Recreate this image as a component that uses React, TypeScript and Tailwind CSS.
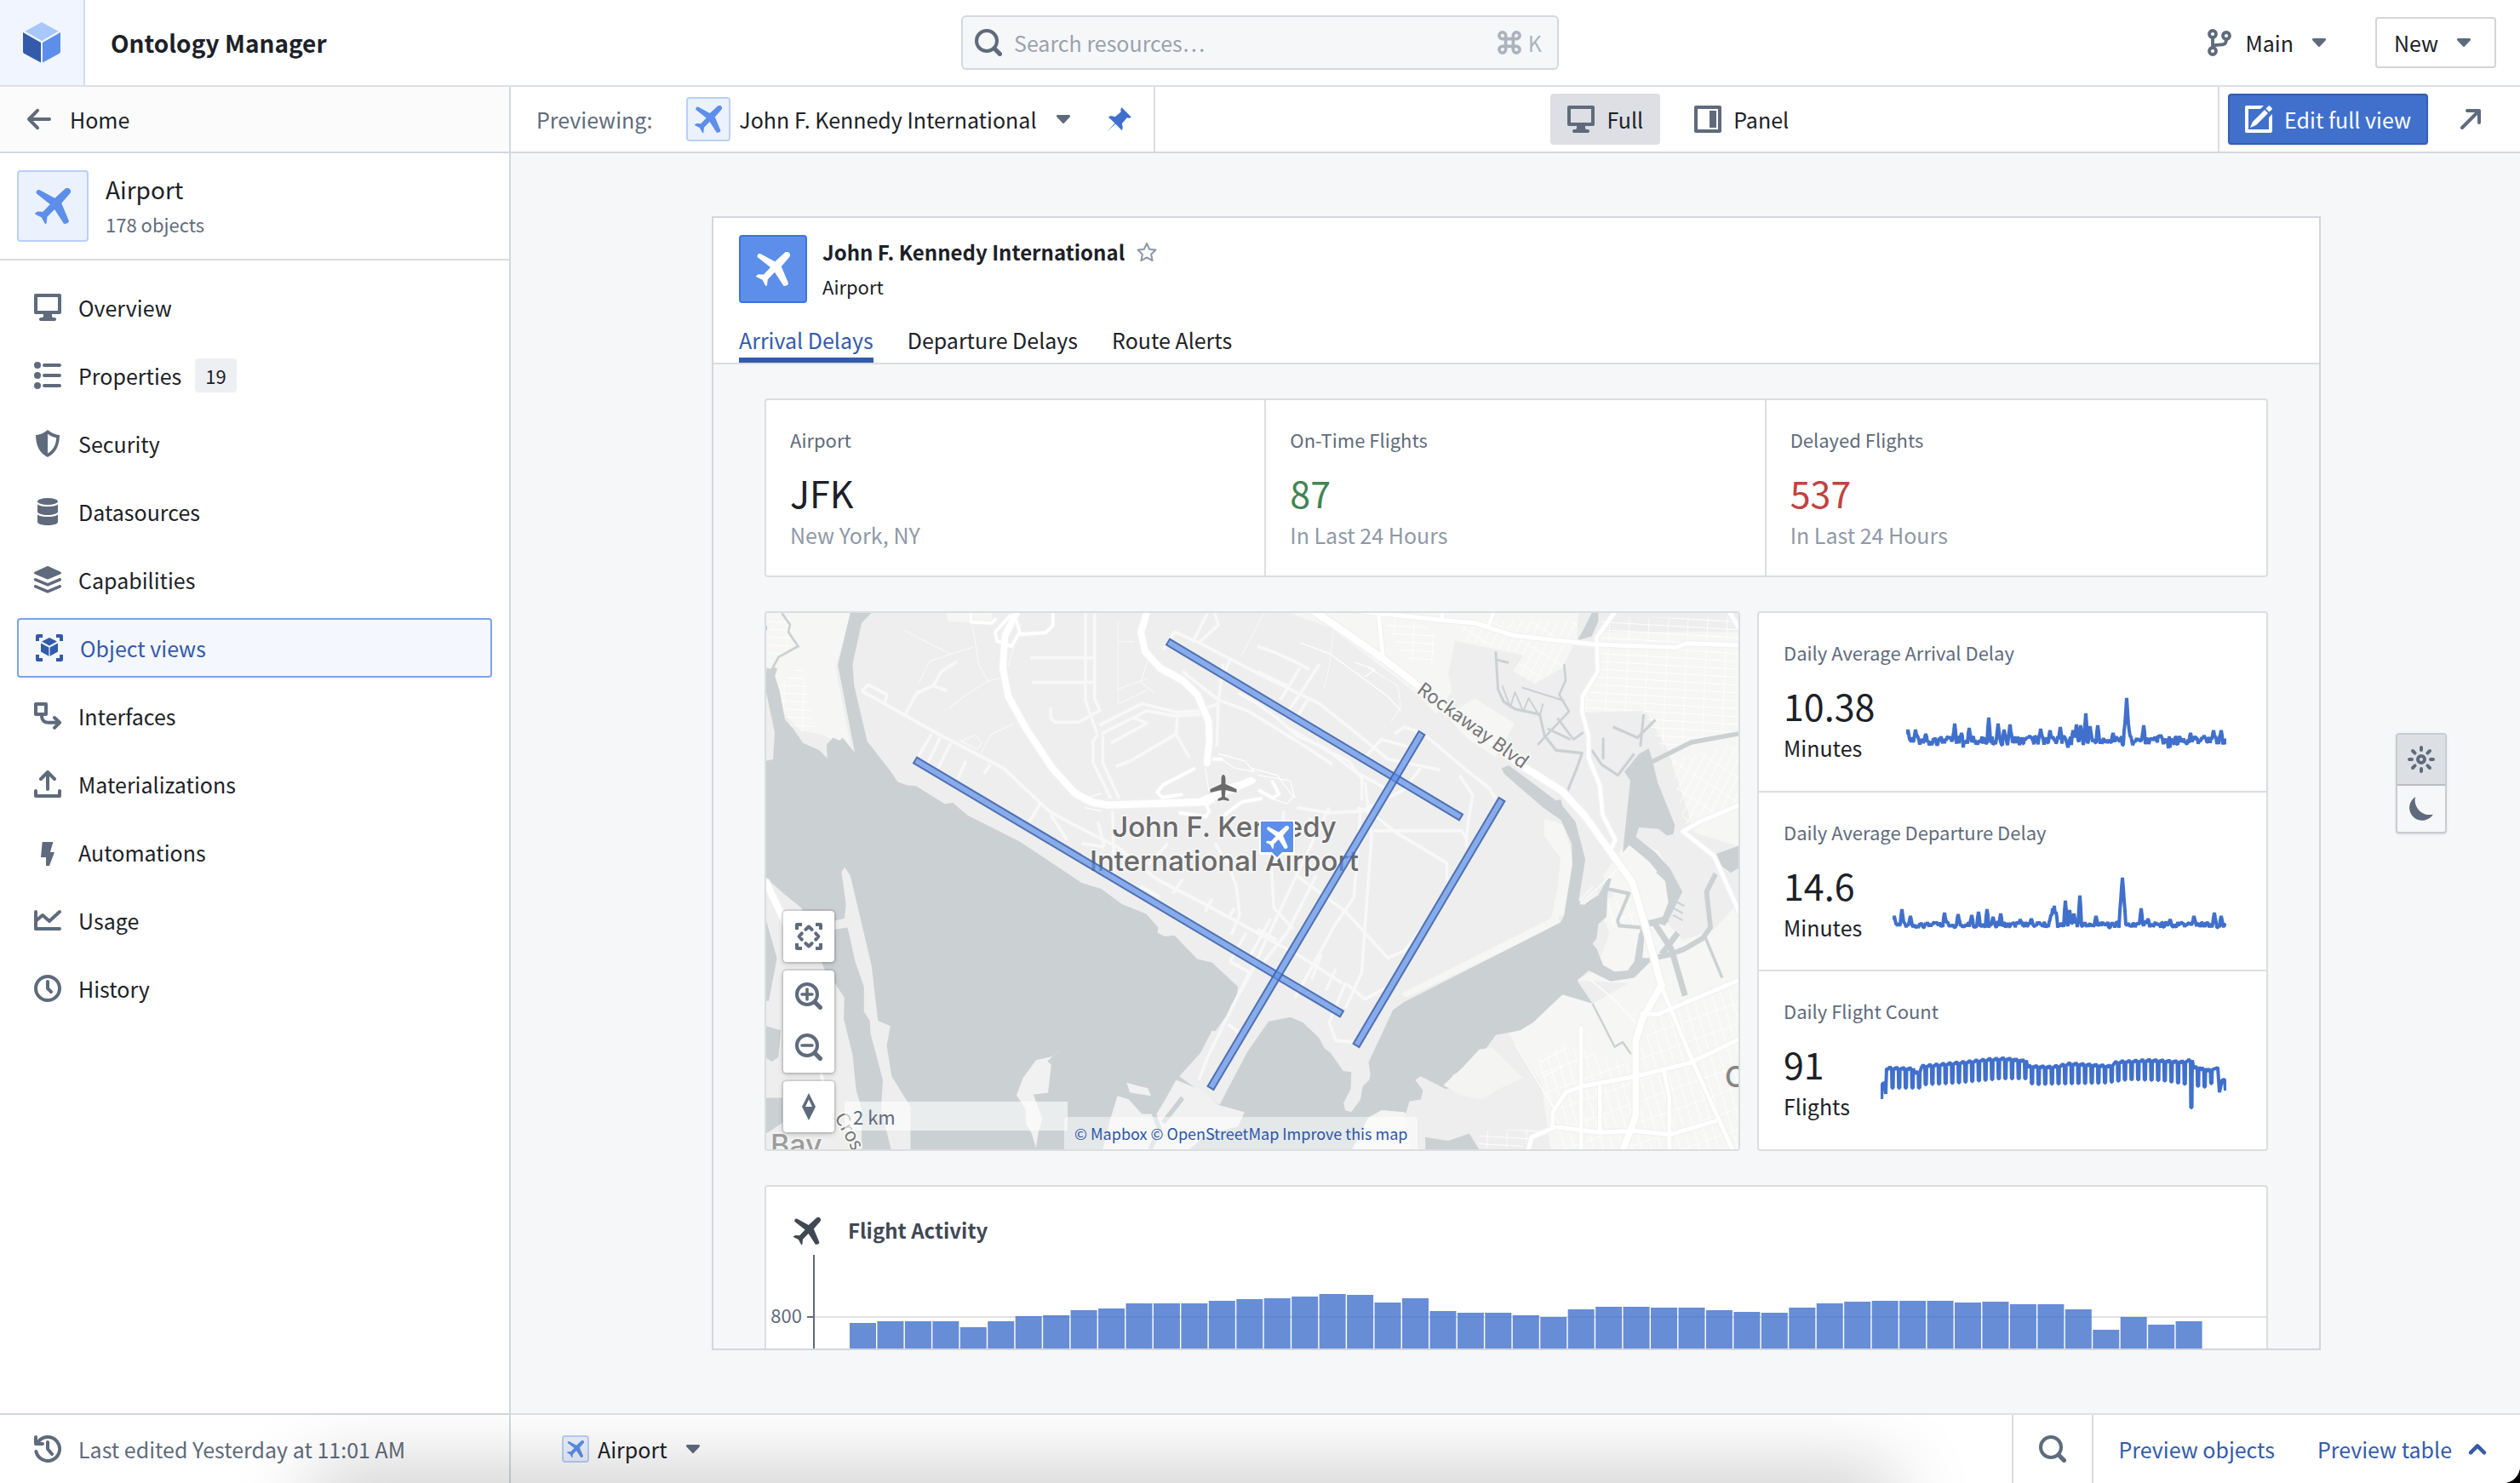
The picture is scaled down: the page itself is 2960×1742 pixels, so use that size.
import type { ReactNode } from "react";

/* ================= ICONS ================= */

type IconProps = { className?: string };

// all icons live on a 16 unit grid
function Icon({ className = "size-8 text-[#5f6b7c]", children }: IconProps & { children: ReactNode }) {
  return (
    <svg viewBox="0 0 16 16" fill="currentColor" className={`shrink-0 ${className}`} aria-hidden="true">
      {children}
    </svg>
  );
}

const Airplane = ({ className }: IconProps) => (
  <Icon className={className}>
    <path d="M15.6 2.5 11.9 6.8l3.2 7.6c.3.8-.3 1.2-.9 1.4l-1.2.2-4.2-6.5-3.3 3.4-.3 2.8c-.1.4-.6.4-.8 0L2.9 13 .4 11.8c-.5-.2-.5-.6-.1-.8l.8-.5 2.5.1 3.2-3.4L.9 2.6C.4 2.2.6 1.3 1.2.9c.3-.2.7-.1 1 0l6.700 3.600L13.400.4a1.500 1.500 0 0 1 2.200 2.100z" />
  </Icon>
);

const Desktop = ({ className }: IconProps) => (
  <Icon className={className}>
    <path d="M15 0H1C.4 0 0 .4 0 1v10c0 .6.4 1 1 1h4.500v1.100c0 .5-.5.9-1 .9H4c-.6 0-1 .4-1 1s.4 1 1 1h8c.6 0 1-.4 1-1s-.4-1-1-1h-.5c-.5 0-1-.4-1-.9V12H15c.6 0 1-.4 1-1V1c0-.6-.4-1-1-1zm-1 10H2V2h12v8z" />
  </Icon>
);

const Properties = () => (
  <Icon>
    <circle cx="2" cy="2" r="2" />
    <circle cx="2" cy="8" r="2" />
    <circle cx="2" cy="14" r="2" />
    <path d="M6 1h9a1 1 0 0 1 0 2H6a1 1 0 0 1 0-2zM6 7h9a1 1 0 0 1 0 2H6a1 1 0 0 1 0-2zM6 13h9a1 1 0 0 1 0 2H6a1 1 0 0 1 0-2z" />
  </Icon>
);

const Shield = () => (
  <Icon>
    <path
      fillRule="evenodd"
      d="M8 0c2 1.700 4.300 2.800 7 3-.1 6.200-2.200 10.700-7 13C3.200 13.700 1.100 9.200 1 3c2.700-.2 5-1.300 7-3zm0 2.400v11.400c3.200-1.900 4.900-5 5.100-9.200-1.900-.3-3.600-1.100-5.100-2.200z"
    />
  </Icon>
);

const Database = () => (
  <Icon>
    <ellipse cx="8" cy="2" rx="6" ry="2" />
    <path d="M2 3.700C3.300 4.600 5.500 5 8 5s4.700-.4 6-1.300V8c0 1-2.700 2-6 2S2 9 2 8zM2 9.700c1.300.9 3.500 1.300 6 1.300s4.700-.4 6-1.300V14c0 1.200-2.700 2-6 2s-6-.8-6-2z" />
  </Icon>
);

const Layers = () => (
  <Icon>
    <path d="M.4 3.400 7.500.1a1.200 1.200 0 0 1 1 0l7.100 3.300c.5.300.5.900 0 1.200L8.500 7.600a1.200 1.200 0 0 1-1 0L.4 4.600C-.1 4.300-.1 3.700.4 3.400z" />
    <path d="m.9 7.900 7.100 3 7.100-3M.9 11.900l7.100 3 7.100-3" fill="none" stroke="currentColor" strokeWidth="1.800" strokeLinecap="round" />
  </Icon>
);

const CubeLocate = ({ className }: IconProps) => (
  <Icon className={className}>
    <path d="M0 1a1 1 0 0 1 1-1h3v2H2v2H0zM12 0h3a1 1 0 0 1 1 1v3h-2V2h-2zM0 12h2v2h2v2H1a1 1 0 0 1-1-1zM14 12h2v3a1 1 0 0 1-1 1h-3v-2h2z" />
    <path d="M8 2l4.500 2.300L8 6.800 3.500 4.300zM3 5.200l4.700 2.500v5.200L3 10.300zM13 5.200 8.300 7.700v5.200L13 10.300z" />
  </Icon>
);

const Interfaces = () => (
  <Icon>
    <path fillRule="evenodd" d="M1 0h6c.6 0 1 .4 1 1v6c0 .6-.4 1-1 1H1c-.6 0-1-.4-1-1V1c0-.6.4-1 1-1zm1 2v4h4V2z" />
    <path d="M4.500 8c0 2.500 1.500 3.900 4 3.900H15M12 9l3 2.900-3 3" fill="none" stroke="currentColor" strokeWidth="2" strokeLinecap="round" strokeLinejoin="round" />
  </Icon>
);

const Export = () => (
  <Icon>
    <g fill="none" stroke="currentColor" strokeWidth="2" strokeLinecap="round" strokeLinejoin="round">
      <path d="M8 11V1.500M4 5l4-4 4 4M1 12v3h14v-3" />
    </g>
  </Icon>
);

const Lightning = () => (
  <Icon>
    <path d="M5 2h6.200l-1.700 6H12L9 16H7v-5H4l.8-8.500c0-.3.1-.5.200-.5z" />
  </Icon>
);

const LineChart = () => (
  <Icon>
    <g fill="none" stroke="currentColor" strokeWidth="2" strokeLinecap="round" strokeLinejoin="round">
      <path d="M1 3v10h14M1.500 8 5 5l4 3.500L15 3" />
    </g>
  </Icon>
);

const Time = () => (
  <Icon>
    <g fill="none" stroke="currentColor" strokeWidth="2" strokeLinecap="round" strokeLinejoin="round">
      <circle cx="8" cy="8" r="7" />
      <path d="M8 4v4l2 2" />
    </g>
  </Icon>
);

const History = () => (
  <Icon>
    <g fill="none" stroke="currentColor" strokeWidth="2" strokeLinecap="round" strokeLinejoin="round">
      <path d="M1.200 9.500A7 7 0 1 0 2.500 3.700M1 1v4h4M8 4v4l2.500 3" />
    </g>
  </Icon>
);

const ArrowLeft = () => (
  <Icon>
    <path d="M7 2.900 2 8l5 5.100M2 8h12" fill="none" stroke="currentColor" strokeWidth="2" strokeLinecap="round" strokeLinejoin="round" />
  </Icon>
);

const Search = ({ className }: IconProps) => (
  <Icon className={className}>
    <circle cx="7" cy="7" r="6" fill="none" stroke="currentColor" strokeWidth="2" />
    <path d="m11.500 11.500 3.200 3.200" stroke="currentColor" strokeWidth="2.600" strokeLinecap="round" />
  </Icon>
);

const CommandKey = () => (
  <Icon className="size-7 text-[#abb3bf]">
    <path
      d="M5.500 5.500V3.300a2.200 2.200 0 1 0-2.200 2.200zm0 0v5m0-5h5m-5 5H3.300a2.200 2.200 0 1 0 2.200 2.200zm0 0h5m0 0v-5m0 5v2.200a2.200 2.200 0 1 0 2.200-2.200zm0-5h2.200a2.200 2.200 0 1 0-2.200-2.200z"
      fill="none"
      stroke="currentColor"
      strokeWidth="2.100"
    />
  </Icon>
);

const Branch = () => (
  <Icon>
    <g fill="none" stroke="currentColor" strokeWidth="1.900">
      <circle cx="4" cy="3" r="2" />
      <circle cx="4" cy="13" r="2" />
      <circle cx="12" cy="4" r="2" />
      <path d="M4 5v6M12 6c0 3-1.500 3.300-4 3.300-2 0-4 .2-4 1.700" />
    </g>
  </Icon>
);

const CaretDown = () => (
  <Icon>
    <path d="M4.800 5.500h6.400c.8 0 1.100.700.600 1.200L8.500 10.200a.7.700 0 0 1-1 0L4.200 6.700c-.5-.5-.2-1.200.6-1.200z" />
  </Icon>
);

const Pin = () => (
  <Icon className="size-8 text-[#3f6fce]">
    <path d="M9.300 1.100c-.7.700-.8 1.500-.4 2.500L5.400 6.600C3.900 6 2.300 5.900 1.500 6.700l3.700 3.700L1 15l4.600-4.200 3.700 3.700c.8-.8.700-2.400.1-3.900l3-3.500c1 .4 1.800.3 2.500-.4z" />
  </Icon>
);

const PanelRight = () => (
  <Icon>
    <path fillRule="evenodd" d="M1 0h14c.6 0 1 .4 1 1v14c0 .6-.4 1-1 1H1c-.6 0-1-.4-1-1V1c0-.6.4-1 1-1zm1 2v12h12V2z" />
    <path d="M9 3h4v10H9z" />
  </Icon>
);

const Edit = () => (
  <Icon className="size-8 text-white">
    <path d="M1 0h10L9 2H2v12h12V7l2-2v10c0 .6-.4 1-1 1H1c-.6 0-1-.4-1-1V1c0-.6.4-1 1-1z" />
    <path d="M4.500 9.500 11.500 2.500l2 2-7 7-3.500 1.500zM12.200 1.800l1.500-1.400c.3-.3.700-.3 1 0l1 1c.3.300.3.700 0 1l-1.500 1.400z" />
  </Icon>
);

const ArrowTopRight = () => (
  <Icon>
    <path d="M3 13 13 3M6 3h7v7" fill="none" stroke="currentColor" strokeWidth="2" strokeLinecap="round" strokeLinejoin="round" />
  </Icon>
);

const Star = () => (
  <Icon className="size-6 text-[#8f99a8]">
    <path d="m8 1.300 2.100 4.500 4.900.6-3.600 3.400 1 4.900L8 12.300l-4.400 2.400 1-4.900L1 6.400l4.900-.6z" fill="none" stroke="currentColor" strokeWidth="1.400" strokeLinejoin="round" />
  </Icon>
);

const Locate = () => (
  <Icon>
    <path d="M0 1a1 1 0 0 1 1-1h3v2H2v2H0zM12 0h3a1 1 0 0 1 1 1v3h-2V2h-2zM0 12h2v2h2v2H1a1 1 0 0 1-1-1zM14 12h2v3a1 1 0 0 1-1 1h-3v-2h2z" />
    <g fill="none" stroke="currentColor" strokeWidth="2" strokeLinecap="round" strokeLinejoin="round">
      <path d="M6.200 3.900 8 2.300l1.800 1.600M6.200 12.100 8 13.700l1.800-1.600M3.900 6.200 2.300 8l1.600 1.800M12.100 6.200 13.700 8l-1.600 1.800" />
    </g>
  </Icon>
);

const Zoom = ({ out = false }: { out?: boolean }) => (
  <Icon>
    <circle cx="7" cy="7" r="6" fill="none" stroke="currentColor" strokeWidth="2" />
    <path d="m11.500 11.500 3.200 3.200" stroke="currentColor" strokeWidth="2.600" strokeLinecap="round" />
    <path d={out ? "M4 7h6" : "M4 7h6M7 4v6"} stroke="currentColor" strokeWidth="1.800" strokeLinecap="round" />
  </Icon>
);

const Compass = () => (
  <Icon>
    <path fillRule="evenodd" d="M8 0l4 8-4 8-4-8zm0 3.800L6 8h4z" />
  </Icon>
);

const Sun = () => (
  <Icon>
    <g fill="none" stroke="currentColor" strokeWidth="2" strokeLinecap="round">
      <circle cx="8" cy="8" r="2" />
      <path d="M8 1v1.500M8 13.500V15M1 8h1.500M13.500 8H15M3 3l1.300 1.300M11.700 11.700 13 13M13 3l-1.300 1.300M4.300 11.700 3 13" />
    </g>
  </Icon>
);

const Moon = () => (
  <Icon>
    <path d="M15 11.200A7.500 7.500 0 1 1 4.600 1c-.9 3 .2 6 2.400 8.200 2.200 2 5.200 2.900 8 2z" />
  </Icon>
);

const ChevronUp = () => (
  <Icon className="size-8 text-[#325baa]">
    <path d="m4 10.200 4-4 4 4" fill="none" stroke="currentColor" strokeWidth="2.200" strokeLinecap="round" strokeLinejoin="round" />
  </Icon>
);

const Logo = () => (
  <svg viewBox="0 0 44 48" className="h-12 w-11" aria-hidden="true">
    <path d="M22 0 41.500 10.800 22 22 2.500 10.800z" fill="#a8c7fa" />
    <path d="M0 12 21 24v23.500L1.200 36.800Q0 36 0 34.800z" fill="#335baa" />
    <path d="M44 12 23 24v23.500l19.800-10.700Q44 36 44 34.800z" fill="#5c8eea" />
  </svg>
);

/* ================= SIDEBAR ================= */

const navItems = [
  { label: "Overview", icon: <Desktop /> },
  { label: "Properties", icon: <Properties />, count: 19 },
  { label: "Security", icon: <Shield /> },
  { label: "Datasources", icon: <Database /> },
  { label: "Capabilities", icon: <Layers /> },
  { label: "Object views", icon: <CubeLocate className="size-8 text-[#325baa]" />, active: true },
  { label: "Interfaces", icon: <Interfaces /> },
  { label: "Materializations", icon: <Export /> },
  { label: "Automations", icon: <Lightning /> },
  { label: "Usage", icon: <LineChart /> },
  { label: "History", icon: <Time /> },
];

function Sidebar() {
  return (
    <aside className="flex w-[600px] shrink-0 flex-col border-r-2 border-[#d3d8de] bg-white">
      <a href="#home" className="flex h-[78px] shrink-0 items-center gap-5 border-b-2 border-[#d3d8de] bg-[#fbfbfb] px-[30px]">
        <ArrowLeft />
        Home
      </a>

      <div className="flex h-[126px] shrink-0 items-center gap-5 border-b-2 border-[#dcdce0] px-5">
        <div className="flex size-[84px] items-center justify-center rounded border-2 border-[#b9d0f6] bg-[#ebf2fd]">
          <Airplane className="size-[42px] text-[#5c8eea]" />
        </div>
        <div>
          <h2 className="text-[28px] leading-[42px]">Airport</h2>
          <p className="text-[22px] leading-[40px] text-[#5f6b7c]">178 objects</p>
        </div>
      </div>

      <nav className="flex flex-1 flex-col gap-[10px] px-5 py-5">
        {navItems.map((item) => (
          <a
            key={item.label}
            href="#nav"
            className={
              item.active
                ? "flex h-[70px] items-center gap-5 rounded border-2 border-[#7aa3ee] bg-[#f4f7fe] px-5 text-[#325baa]"
                : "flex h-[70px] items-center gap-5 px-5"
            }
          >
            {item.icon}
            <span>{item.label}</span>
            {item.count && (
              <span className="-ml-1 rounded bg-[#eeeff2] px-3 text-[22px] leading-10">{item.count}</span>
            )}
          </a>
        ))}
      </nav>

      <div className="flex h-[82px] shrink-0 items-center gap-5 border-t-2 border-[#d3d8de] px-10 text-[#5f6b7c]">
        <History />
        Last edited Yesterday at 11:01 AM
      </div>
    </aside>
  );
}

/* ================= SPARKLINES ================= */

type Point = [number, number];

// daily noise around a base line, with the listed peaks on top
function noisySeries(width: number, base: number, noise: number, peaks: Point[]) {
  const pts: string[] = [];
  for (let x = 1; x < width; x += 1) {
    const r = Math.abs(Math.sin(x * 12.9898) * 43758.5453) % 1;
    let y = base - noise * 0.6 + r * noise;
    for (const [px, py] of peaks) {
      if (px === x) y = py;
      else if (Math.abs(px - x) === 1) y = Math.min(y, base - (base - py) * 0.6);
    }
    pts.push(`${x},${y.toFixed(1)}`);
  }
  return pts.join(" ");
}

const plateau: Point[] = [[7, 12], [40, 13], [46, 18], [52, 10], [94, 6], [130, 2], [150, 1], [174, 4], [176, 10], [205, 11], [225, 7], [272, 10], [280, 5], [320, 3], [358, 5], [366, 3], [371, 11], [390, 15], [397, 13]];
const weekends: Point[] = [[14, 37], [46, 37], [52, 33], [90, 31], [140, 26], [171, 26], [179, 33], [210, 32], [265, 31], [290, 27], [330, 28], [355, 32], [380, 36], [390, 31], [399, 41]];

function valueAt(list: Point[], x: number) {
  const i = list.findIndex((p) => p[0] >= x);
  if (i <= 0) return list[i === 0 ? 0 : list.length - 1][1];
  const [x0, y0] = list[i - 1];
  const [x1, y1] = list[i];
  return y0 + ((y1 - y0) * (x - x0)) / (x1 - x0);
}

// weekday plateau with one weekend dip every seven points
function weeklySeries() {
  const pts = ["1,50", "2,32", "5,31", "6,44", "7,14"];
  for (let x = 14; x < 392; x += 7.800) {
    const top = valueAt(plateau, x);
    const dip = x > 359 && x < 367 ? 60 : valueAt(weekends, x);
    pts.push(`${x - 5},${top + 3}`, `${x - 3},${top}`, `${x - 1},${top + 3}`, `${x - 0.600},${dip}`, `${x + 0.600},${dip}`, `${x + 1},${top + 1}`);
  }
  return pts.concat(["396,13", "398,42", "401,28", "404,27", "405,40"]).join(" ");
}

const arrivalPeaks: Point[] = [
  [2, 37], [11, 37], [23, 42], [57, 30], [65, 41], [67, 58], [74, 35], [97, 23], [108, 30], [115, 37], [122, 31], [145, 44], [158, 36],
  [169, 38], [181, 34], [190, 58], [196, 38], [200, 31], [205, 32], [211, 18], [216, 33], [225, 32], [243, 41], [257, 30],
  [258, 15], [259, 0], [260, 15], [261, 30], [279, 32], [299, 43], [308, 59], [310, 58], [334, 41], [350, 44], [361, 38], [370, 38],
];

const departurePeaks: Point[] = [
  [2, 45], [11, 37], [21, 45], [61, 41], [77, 43], [93, 44], [101, 40], [111, 37], [118, 46], [127, 42], [150, 49], [163, 48],
  [186, 44], [188, 36], [190, 33], [192, 40], [203, 27], [208, 38], [213, 42], [220, 21], [239, 45], [268, 27], [269, 12], [270, 0],
  [271, 12], [272, 27], [292, 36], [300, 48], [326, 49], [354, 45], [378, 41], [386, 45],
];

const metrics = [
  { title: "Daily Average Arrival Delay", value: "10.38", unit: "Minutes", width: 376, points: noisySeries(376, 51, 11, arrivalPeaks) },
  { title: "Daily Average Departure Delay", value: "14.6", unit: "Minutes", width: 392, points: noisySeries(392, 56, 7, departurePeaks) },
  { title: "Daily Flight Count", value: "91", unit: "Flights", width: 406, points: weeklySeries() },
];

function MetricPanel() {
  return (
    <div className="flex w-[600px] shrink-0 flex-col divide-y-2 divide-[#dcdddf] rounded border-2 border-[#dcdddf] bg-white">
      {metrics.map((m) => (
        <div key={m.title} className="flex-1 px-[29px] pt-7">
          <h3 className="text-[22px] leading-9 text-[#5f6b7c]">{m.title}</h3>
          <div className="mt-[14px] flex items-start justify-between pr-[18px]">
            <div>
              <p className="text-[43px] leading-[60px]">{m.value}</p>
              <p className="leading-10">{m.unit}</p>
            </div>
            <svg viewBox={`0 -2 ${m.width} 64`} className="mt-5 h-16" role="img" aria-label={m.title}>
              <polyline points={m.points} fill="none" stroke="#4070cc" strokeWidth="4" strokeLinejoin="bevel" />
            </svg>
          </div>
        </div>
      ))}
    </div>
  );
}

/* ================= MAP ================= */

// runways as [x1, y1, x2, y2] centre lines
const runways = [
  [175, 173, 676, 471],
  [472, 34, 816, 240],
  [770, 141, 522, 558],
  [864, 219, 693, 508],
];

function Runway({ line }: { line: number[] }) {
  const [x1, y1, x2, y2] = line;
  const len = Math.hypot(x2 - x1, y2 - y1);
  const nx = (-(y2 - y1) / len) * 4;
  const ny = ((x2 - x1) / len) * 4;
  return (
    <polygon
      points={`${x1 + nx},${y1 + ny} ${x2 + nx},${y2 + ny} ${x2 - nx},${y2 - ny} ${x1 - nx},${y1 - ny}`}
      fill="#5c8eea"
      fillOpacity="0.7"
      stroke="#3c62a8"
      strokeOpacity="0.85"
      strokeWidth="2"
    />
  );
}

function Terrain() {
  return (
    <g transform="scale(.3827 .4209) translate(-52 -47)">
      <rect x="52" y="47" width="2990" height="1500" fill="#eeeeee" />

      {/* neighbourhoods */}
      <g fill="#f6f6f4">
        <path d="M52 47h260l-47 153 52 245-40-35-60-25-60-10-45-40-60-80z" />
        <path d="M605 47h140v30l-135-7z" />
        <path d="M1660 47H2545L2540 120 2495 200 2411 245 2346 210 2376 165 2166 125 2146 215 2156 265 2110 330 2046 270 1786 90z" />
        <path d="M2225 285l125 70-60 95-90-55-60-60z" />
        <path d="M2606 100H3042V700L2900 660 2820 430 2750 320 2560 325 2556 280 2606 210z" />
        <path d="M2330 1220 2496 1112 2590 1137 2700 1080 2540 1073 2600 1040 2640 940 2600 850 2700 830 2810 905 2866 960 2960 930 3042 850V1547H2460L2431 1360z" />
        <path d="M2690 690l100 20 70 110-50 90-120-10-70-120z" />
        <path d="M2440 620l60 20 30 100-30 150-40 10 20-80 10-90-50-60z" />
        <path d="M2016 1120 2000 1110 2480 890 2490 915z" />
      </g>

      {/* residential street grids */}
      <path d="M2180 70H2545L2530 120 2480 210 2411 245 2346 210 2376 165 2190 120z" fill="url(#streetsA)" />
      <path d="M1940 60h110l60 50-10 80-80-10z" fill="url(#streetsB)" />
      <path d="M2615 60H3042V380L2890 400 2800 430 2745 320 2560 320 2560 280 2610 215z" fill="url(#streetsB)" />
      <path d="M2830 460 3042 410V580L2870 640z" fill="url(#streetsA)" />
      <path d="M2610 860l80-20 50 80-90 5z" fill="url(#streetsC)" />
      <path d="M2800 1140 3042 1080V1547H2480L2470 1480 2420 1290 2500 1250 2710 1310z" fill="url(#streetsC)" />
      <path d="M2240 1490h190l-60 50h-130z" fill="url(#streetsB)" />
      <path d="M60 60h60l20 70-80 60zM80 260l80-70 45 195-70-10-50-50z" fill="url(#streetsB)" />

      {/* Jamaica Bay and the western channel */}
      <path
        fill="#cbd1d3"
        d="M310 47h65l-30 28-28 115 5 60 40 155 73 85 20 28 30 10 27 2 88 50 25-3 45 35 160 73 190 115 60 17 65 43 73 27 37 38-2 15 22 10 30-3 70 66 45 9 80 68-7 45-63 80-10-2-35 62-65 65 60 40 63 40 87-150 64-83 67-12 38 15 49 42 18 30 18 13 39 50 25 3-2 47-22 40 5 20 19 5 28-35 7-37 20-18 3-15-5-35 75-145 35-23 480-222 10-20 25-140-2-60-33-65-55-35-120-95-7-15 22-8 145 98 15-2 5 17 40 45 30 105-20 113 10 14 50-27 30-50 10 5-12 40-3 65-25 20-5 40-13 15 13 15 20 45 35 18 40-3 20-25 15-80 18-8-8 78 25 0 0 10-50 45-72 10-68-30-35 28 47 64-92-25-90 78-40 22-75 13-75 95-55 15-10 15 7 22-22 3-75-35-17 10 24 30-7 25-35 5-10 32-70-7-30 20-40 45-20 44H495l0-119-58-85-15-85 11-55-38-15-20-155-65-250-17-23-10 13 14 90-5 40-30 5v25l40-5 23 95 27 70v70l18 25 2 35 38 130-5 80 30 114H345V1430l-17-50-11-100-27-100 2-60-30-40-30-35-72-175-55-40-55-45V460l23-5 5-75-28-120 3-60 20 5 20 60 17 80 25 25 30 40 50 20 25 23-3-38 20-20 20 8 10-8 37 42-52-245z"
      />
      <path fill="#cbd1d3" d="M52 905l33 105-25 120h-8zM52 1200l45 12-8 75-20 12-17-10zM52 1400h50v70l-50 30z" />
      <path d="M80 200l-25 60" stroke="#cbd1d3" strokeWidth="14" fill="none" />
      <path d="M60 220 90 170 150 140 120 100 125 80 100 47" stroke="#cbd1d3" strokeWidth="7" fill="none" />

      {/* marsh islands */}
      <g fill="#f1f1f1">
        <path d="M965 1258l-50 40 12 10-10 78-45 5 27 67-12 40-7 42-13-40-17-25-3-45-27-37 20-48 40-50 50-10z" />
        <path d="M1130 1395l35 10 40 40 45 0 30-45 30-50 80 30 50 40 80 20-20 40-90 20-60 44H1085l25-90z" />
        <path d="M1158 1358l40 10 25 5 10 22-35-5-30-5z" />
      </g>
      <path d="M1240 1440l20 50-30 54M1330 1400l-60 70M1180 1400l40 20" stroke="#cbd1d3" strokeWidth="14" fill="none" />
      <path d="M1900 1455l40-20 70 5 20 104H1850z" fill="#f4f4f2" />
      <path d="M2280 1260l95 85-75 30-50 30-60-10-60-30 60-50 50-50z" fill="#f4f4f2" />

      {/* creeks to the east */}
      <g fill="#cbd1d3">
        <path d="M2681 715l23-200-18-25 45-50 30-15 10 30 17 65 53 120-5 25-20 3-25-18-60-5-10 27 60 43 45 45 38 65-38 70-15 25-16-5 26-60-10-60-50-55-60-45z" />
        <path d="M2966 720l76-25v62l-30 15-40-27z" />
        <path d="M2606 47h-20l-25 45-20 32 45-12 20-42z" />
        <path d="M2075 1510l70 10 65-20 30 44h-165z" />
      </g>
      <g fill="none" stroke="#cbd1d3" strokeLinejoin="round">
        <path d="M2771 462 2891 408 3036 384" strokeWidth="13" />
        <path d="M2966 775 2938 825 2950 925 2926 955 2870 985 2826 1000 2766 1012" strokeWidth="15" />
        <path d="M2780 915 2830 985 2872 1115M2850 940 2800 1000M2820 900 2770 912 2735 918" strokeWidth="18" />
        <path d="M2931 945 2986 1065" strokeWidth="9" />
        <path d="M2588 1137 2656 1258 2681 1245 2706 1278" strokeWidth="6" />
        <path d="M2620 815 2650 820 2700 830 2665 905 2670 920 2740 925 2735 1000" strokeWidth="10" />
        <path d="M2291 155 2298 260 2316 295 2350 315 2426 330 2441 390 2476 430 2556 438 2540 480 2511 545" strokeWidth="8" />
        <path d="M2295 178l36 8M2501 190 2506 235 2486 275 2516 322 2466 370 2420 415M2480 340l50 60 30-20M2450 370l70 30" strokeWidth="7" />
        <path d="M2311 250 2336 310 2350 268 2376 322 2392 285 2426 335 2436 300M2371 255 2501 292" strokeWidth="5" />
        <path d="M2586 430 2616 470 2666 500 2716 440M2651 365 2726 395 2781 345M2621 395v60M2745 330l-10 90" strokeWidth="8" />
        <path d="M2785 770l60 50M2840 850l30 15M2835 870l30 15M2835 890l30 15" strokeWidth="5" />
      </g>
      <path d="M2550 850l40-40M2560 860l45-35" stroke="#f6f6f4" strokeWidth="6" />

      {/* taxiways */}
      <g fill="none" stroke="#f8f8f8" strokeWidth="9" strokeLinejoin="round">
        <path d="M345 265l20-18 58 28-8 25-70-35M415 300 560 375 780 480 920 600 1000 640 1130 700 1250 790 1400 860 1520 920 1700 1010 1820 1080" />
        <path d="M475 335l40-65 50-20 25-40 48-28M565 250l42 14M520 445l40-60M548 465l38-70M580 480l38-70M640 510l25-50M720 495l20-25M860 630l35-55M925 610l50 70M1020 690l70 10M1090 700l-20-70M1200 810l60 30M1300 830l30-40M1400 880l20-35M1470 900l20-30" />
        <path d="M862 172h195M868 241h190M1060 47v240l18 35M1032 47v245l35 90M925 310v32l15 10h70l70-35M1070 385l-15 20v60l55 100M1085 390v75l50 100M1075 360l130-60 110 25 65-5 60-20M1080 385l140-65 90 15 80-5M1110 410l110-55-40-15M1315 325l-5 60 40 65M1310 385l-140 75-45 15" />
        <path d="M1115 600l5 200M1285 690l-60 60M1430 690l40 60 25 60 10 80-25 55" />
        <path d="M1270 150l35-50 75 30 60-50-20-60M1380 130l190 90 180 80 130 95 80 60 160 30M1330 210l110 80 90 30 160 90 100 60M1360 130l50-90M1440 290l15-100M1440 290l-5 130M1475 180l-20 40" />
        <path d="M1500 270l60 30 60 40 60 50 80 30 100 70 100 50M1560 210l90 40M1640 340l60-80 50-70M1716 285l-40 60M1660 370l110 60 70 30 40 50v60M1560 140l60 20 70 30 30 15M1690 200l-60 90" />
        <path d="M1980 385l30-20 60 20 130 100 70 50 20 30M2180 500 2220 555 2205 640 2200 700M1880 460l60-60 80 20M1866 590l50 20 70 50 110 60 45 25v50M1916 655h270l15 20M1680 590l100 15 100-5 130-60 50-60M1640 600v30l-40 90 10 150 60 60M1780 590l-80 150-160 310-60 100" />
        <path d="M1680 780l150 100 130 130 50-20 60-70M1890 520l20 150-20 250-10 130-50 100M1876 600l-20 240-60 80-120 200M1740 780l-90 160-70 80M1716 620l60 40M1830 1080l-50 110 20 50 60 5M1830 1080l60 45 60-30M1726 1070l30-70M1770 1100l30-60" />
        <path d="M1475 1020l50-80M1475 1020l60 30-130 240-25 60M1500 1215l-30-20M1560 930l60 30M1600 900l-60 100" />
      </g>
      <g fill="none" stroke="#f8f8f8" strokeWidth="3">
        <path d="M478 97l140 65 70-20M618 162l-65 20-32 60M685 82l20 110 28 45 45-10M733 237l-70 40-50 37M812 355l-70 32-32 52M835 75l-40 120M1132 70v232l90-40M1132 127h50M1132 260l90-30M1222 180l-20 60 40 30M1580 47l-70 120" />
        <path d="M1800 47l-20 150-15 60M1900 200l90 50 10 60-30 40M650 405l45-18 18 25-15 15z" />
      </g>

      {/* roads, soft casing under the white line */}
      {["#f0f1f1", "#ffffff"].map((stroke, i) => (
        <g key={stroke} fill="none" stroke={stroke} strokeLinejoin="round" strokeLinecap="round">
          <path
            strokeWidth={i ? 20 : 27}
            d="M820 47 785 110 778 200 795 280 850 370 930 480 1000 550 1050 575 1100 583 1380 575 1450 550 1540 515M1222 40 1202 100 1215 155 1260 200 1330 235 1375 275 1410 350 1412 400 1405 465M1716 30 1946 175 2046 245 2366 470 2496 545 2566 615 2711 800 2756 940 2800 1090M1716 30 1760 60"
          />
          <path strokeWidth={i ? 20 : 27} d="M2800 1085 2741 1180 2721 1240 2721 1450 2680 1550M52 800 110 910 150 1000" />
          <path
            strokeWidth={i ? 12 : 18}
            d="M2800 1090 2896 1300 3020 1550M1931 47 1946 180M1856 40 2126 67 2226 75 2346 110 2596 135 2846 143 2876 132 3042 137M2126 67V30M2270 80l20-50M2660 40 2601 115 2604 210 2558 280 2556 325 2576 390 2576 450 2611 530 2619 610 2658 680 2640 715"
          />
          <path
            strokeWidth={i ? 12 : 18}
            d="M3042 1070 2786 1168 2740 1165M3042 582 2916 630 2866 657 2961 725 3042 890M3042 1235 2886 1303 2721 1340 2556 1368 2506 1385 2466 1440 2466 1485 2401 1510 2390 1550M2553 1205V1550M2466 1480 2611 1497 2721 1492 2824 1503 2966 1465M2806 1320 2824 1400V1550M2611 1370V1495M3010 47l40 60"
          />
          <path
            strokeWidth={i ? 9 : 14}
            d="M680 47v25l65 3 10-10M800 55l-45 45 5 25 45 15 25-40-10-30M830 107l80-5 22-20V47M1365 482l-95 45-18 20 15 15 60-8M1425 455h25M1350 575l50 5 12 20-10 15-80-10M1410 580l60-50 80-15M1606 518l20 35-20 10-40-20M1460 610l50-35 60-10M215 1310l15 60"
          />
        </g>
      ))}
      <g fill="none" stroke="#ffffff" strokeWidth="3">
        <path d="M1440 440l80 20 30 30-60-10-50-30M1400 480l10 60 20 40M1540 480l80 20 50 60-20 20-60-20M1560 500l100 15 15 50M1020 570l60-20M1030 590l50 10M1690 130l90 30 180 120 40 40M1860 185l60 20-30 20" />
        <path d="M2350 1250l80 120 40 60M2430 1300l80-40M2440 1340l60-30M2580 1070l80 60 60 60M2550 860l130-110" />
      </g>
    </g>
  );
}

function AirportMap() {
  return (
    <div className="relative min-w-0 flex-1 overflow-hidden rounded border-2 border-[#dcdddf]">
      <svg viewBox="0 0 1142 630" preserveAspectRatio="xMidYMid slice" className="block h-full w-full" role="img" aria-label="Map of John F. Kennedy International Airport">
        <defs>
          <pattern id="streetsA" width="24" height="60" patternUnits="userSpaceOnUse" patternTransform="rotate(30)">
            <path d="M0 0H24M0 0V60" stroke="#ffffff" strokeWidth="4" fill="none" />
          </pattern>
          <pattern id="streetsB" width="60" height="22" patternUnits="userSpaceOnUse" patternTransform="rotate(3)">
            <path d="M0 0H60M0 0V22" stroke="#ffffff" strokeWidth="4" fill="none" />
          </pattern>
          <pattern id="streetsC" width="28" height="56" patternUnits="userSpaceOnUse" patternTransform="rotate(-18)">
            <path d="M0 0H28M0 0V56" stroke="#ffffff" strokeWidth="4" fill="none" />
          </pattern>
        </defs>
        <Terrain />

        <g className="font-['Inter',sans-serif]" stroke="#f4f4f4" strokeWidth="4" paintOrder="stroke" strokeLinejoin="round">
          <g fill="#6b6b6b" fontSize="33" fontWeight="500" textAnchor="middle">
            <text x="538" y="263">John F. Kennedy</text>
            <text x="538" y="303">International Airport</text>
          </g>
          <g fill="#9c9c9c" fontSize="34" fontWeight="500">
            <text x="5" y="637">Bay</text>
            <text x="1126" y="557" fill="#858585">C</text>
            <text x="-14" y="25" fontSize="26">o</text>
          </g>
        </g>
        <g className="font-['Noto_Sans_CJK_SC',sans-serif]" fill="#757575" stroke="#f6f6f6" strokeWidth="4" paintOrder="stroke" fontSize="22">
          <text transform="translate(763 93) rotate(36)">Rockaway Blvd</text>
          <text transform="translate(80 592) rotate(62)">Cros</text>
        </g>

        {/* plane glyph above the airport name */}
        <path
          d="M537 190c1.500 0 2.500 2 2.500 5v6l13 6v4l-13-3-.7 8 4.700 2.500v2.500l-6.500-1.500-6.500 1.500v-2.500l4.700-2.500-.7-8-13 3v-4l13-6v-6c0-3 1-5 2.500-5z"
          fill="#6b6b6b"
          stroke="#f6f6f6"
          strokeWidth="2"
          paintOrder="stroke"
        />

        {runways.map((line) => (
          <Runway key={line.join()} line={line} />
        ))}

        {/* airport marker */}
        <g>
          <path d="M582 243h36q3 0 3 3v35q0 3-3 3h-12l-6 7-6-7h-12q-3 0-3-3v-35q0-3 3-3z" fill="#ffffff" />
          <path d="M582 245h36q1 0 1 1v34q0 1-1 1h-12l-6 6-6-6h-12q-1 0-1-1v-34q0-1 1-1z" fill="#5c8eea" />
          <svg x="587" y="250" width="27" height="27" viewBox="0 0 16 16" className="text-white">
            <Airplane className="size-4" />
          </svg>
        </g>
      </svg>

      {/* map controls */}
      <div className="absolute bottom-5 left-5 flex flex-col gap-[10px]">
        <button aria-label="Fit to content" className="flex size-[60px] items-center justify-center rounded bg-white shadow-[0_0_0_2px_rgba(17,20,24,0.1),0_2px_6px_rgba(17,20,24,0.2)]">
          <Locate />
        </button>
        <div className="flex flex-col rounded bg-white shadow-[0_0_0_2px_rgba(17,20,24,0.1),0_2px_6px_rgba(17,20,24,0.2)]">
          <button aria-label="Zoom in" className="flex size-[60px] items-center justify-center">
            <Zoom />
          </button>
          <button aria-label="Zoom out" className="flex size-[60px] items-center justify-center">
            <Zoom out />
          </button>
        </div>
        <button aria-label="Reset bearing" className="flex size-[60px] items-center justify-center rounded bg-white shadow-[0_0_0_2px_rgba(17,20,24,0.1),0_2px_6px_rgba(17,20,24,0.2)]">
          <Compass />
        </button>
      </div>
      <div className="absolute bottom-[22px] left-[92px] w-[262px] bg-white/60 px-[10px] text-[22px] leading-[34px] text-[#5f6b7c]">
        2 km
      </div>
      <div className="absolute bottom-0 left-[350px] flex gap-1 rounded-t bg-white/50 px-3 text-[18px] leading-[38px] text-[#2a57a8]">
        <a href="#mapbox">© Mapbox</a>
        <a href="#osm">© OpenStreetMap</a>
        <a href="#improve">Improve this map</a>
      </div>
    </div>
  );
}

/* ================= FLIGHT ACTIVITY ================= */

// bar heights above the visible edge of the chart
const bars = [
  30, 32, 32, 32, 25, 32, 38, 39, 45, 47, 53, 53, 53, 56, 58, 59, 61, 64, 63, 54, 59, 44, 42, 42, 39, 37, 46, 49, 49,
  48, 48, 45, 43, 42, 48, 53, 55, 56, 56, 56, 54, 55, 52, 52, 46, 22, 37, 28, 32,
];

function FlightActivity() {
  return (
    <section className="flex-none overflow-hidden rounded-t border-2 border-b-0 border-[#dcdddf] bg-white">
      <div className="flex h-20 items-end gap-8 px-8">
        <Airplane className="mb-3 size-8 text-[#404854]" />
        <h3 className="pb-1 text-[24px] font-bold leading-[50px] text-[#404854]">Flight Activity</h3>
      </div>
      <svg viewBox="0 0 1762 112" className="block w-full" role="img" aria-label="Flight activity by week">
        <path d="M56 0v112M48 73h8" stroke="#5f6b7c" strokeWidth="2" />
        <path d="M57 73h1705" stroke="#e0e2e6" strokeWidth="2" />
        <text x="42" y="80" textAnchor="end" fontSize="22" fill="#5f6b7c">800</text>
        {bars.map((h, i) => (
          <rect key={i} x={98 + i * 32.450} y={110 - h} width="31" height={h + 2} fill="#4070cc" fillOpacity="0.8" />
        ))}
      </svg>
    </section>
  );
}

/* ================= OBJECT VIEW ================= */

const stats = [
  { label: "Airport", value: "JFK", note: "New York, NY", color: "text-[#1c2127]" },
  { label: "On-Time Flights", value: "87", note: "In Last 24 Hours", color: "text-[#3f8553]" },
  { label: "Delayed Flights", value: "537", note: "In Last 24 Hours", color: "text-[#c1433f]" },
];

function ObjectView() {
  return (
    <article className="ml-[236px] mr-[234px] flex h-9/10 min-w-0 flex-1 flex-col overflow-hidden border-2 border-[#d3d6dc]">
      <header className="shrink-0 border-b-2 border-[#dcdddf] bg-white px-[30px]">
        <div className="flex gap-[18px] pt-5">
          <div className="flex size-20 items-center justify-center rounded border-2 border-[#3f73de] bg-[#5c8eea]">
            <Airplane className="size-10 text-white" />
          </div>
          <div>
            <div className="flex items-center gap-[14px]">
              <h1 className="text-[24px] font-bold leading-10">John F. Kennedy International</h1>
              <button aria-label="Add to favorites">
                <Star />
              </button>
            </div>
            <p className="text-[22px] leading-10">Airport</p>
          </div>
        </div>
        <div role="tablist" className="mt-[22px] flex gap-10">
          <button role="tab" aria-selected="true" className="h-12 border-b-[6px] border-[#325baa] text-[#325baa]">
            Arrival Delays
          </button>
          <button role="tab" className="h-12 border-b-[6px] border-transparent">Departure Delays</button>
          <button role="tab" className="h-12 border-b-[6px] border-transparent">Route Alerts</button>
        </div>
      </header>

      <div className="flex flex-1 flex-col gap-10 overflow-hidden px-[60px] pt-10">
        <div className="grid h-[210px] shrink-0 grid-cols-3 divide-x-2 divide-[#dcdddf] rounded border-2 border-[#dcdddf] bg-white">
          {stats.map((s) => (
            <div key={s.label} className="px-7 pt-7">
              <h3 className="text-[22px] leading-9 text-[#5f6b7c]">{s.label}</h3>
              <p className={`mt-[14px] text-[43px] leading-[60px] ${s.color}`}>{s.value}</p>
              <p className="leading-10 text-[#8f99a8]">{s.note}</p>
            </div>
          ))}
        </div>

        <div className="flex h-[634px] shrink-0 gap-5">
          <AirportMap />
          <MetricPanel />
        </div>

        <FlightActivity />
      </div>
    </article>
  );
}

/* ================= PAGE ================= */

export default function App() {
  return (
    <div className="h-screen bg-black">
      <div className="relative flex h-full flex-col overflow-hidden rounded-br-[20px] bg-[#f6f7f9] font-['Noto_Sans_CJK_SC','Open_Sans',sans-serif] text-[25px] leading-10 text-[#1c2127]">
        {/* ================= TOP BAR ================= */}
        <header className="grid h-[102px] shrink-0 grid-cols-[1fr_702px_1fr] items-center border-b-2 border-[#dde0e6] bg-white">
          <div className="flex h-full items-center gap-[30px]">
            <div className="flex h-full w-[100px] items-center justify-center border-r-2 border-[#cddcfa] bg-[#f0f5ff]">
              <Logo />
            </div>
            <h1 className="text-[28px] font-bold">Ontology Manager</h1>
          </div>

          <label className="flex h-16 items-center gap-[14px] rounded-md border-2 border-[#d3d8de] bg-[#f6f7f9] px-[14px]">
            <Search />
            <input type="text" aria-label="Search resources" placeholder="Search resources…" className="min-w-0 flex-1 bg-transparent outline-none placeholder:text-[#9aa2ae]" />
            <span className="flex items-center gap-2 pr-1 text-[#abb3bf]">
              <CommandKey />K
            </span>
          </label>

          <div className="flex items-center justify-end gap-[50px] pr-7">
            <button className="flex items-center gap-[14px]">
              <Branch />
              Main
              <CaretDown />
            </button>
            <button className="flex h-[60px] items-center gap-[14px] rounded border-2 border-[#d3d5d8] px-5">
              New
              <CaretDown />
            </button>
          </div>
        </header>

        <div className="flex min-h-0 flex-1">
          <Sidebar />

          <main className="flex min-w-0 flex-1 flex-col">
            {/* ================= PREVIEW TOOLBAR ================= */}
            <div className="flex h-[78px] shrink-0 border-b-2 border-[#d3d8de] bg-white">
              <div className="flex items-center border-r-2 border-[#dcdde0] pl-[30px] pr-6">
                <span className="text-[#5f6b7c]">Previewing:</span>
                <button className="ml-10 flex items-center gap-[10px]">
                  <span className="flex size-[52px] items-center justify-center rounded border-2 border-[#b9d0f6] bg-[#ebf2fd]">
                    <Airplane className="size-8 text-[#5c8eea]" />
                  </span>
                  John F. Kennedy International
                  <span className="pl-[6px]">
                    <CaretDown />
                  </span>
                </button>
                <button aria-label="Pin object" className="ml-[34px]">
                  <Pin />
                </button>
              </div>

              <div className="flex flex-1 items-center justify-center gap-5 pr-5">
                <button className="flex h-[60px] items-center gap-[14px] rounded bg-[#dddfe4] px-5">
                  <Desktop />
                  Full
                </button>
                <button className="flex h-[60px] items-center gap-[14px] rounded px-5">
                  <PanelRight />
                  Panel
                </button>
              </div>

              <div className="flex items-center gap-[34px] border-l-2 border-[#dcdde0] pl-[10px] pr-[42px]">
                <button className="flex h-[60px] items-center gap-[14px] rounded border-2 border-[#335fae] bg-[#4070cc] px-[18px] text-white shadow-sm">
                  <Edit />
                  Edit full view
                </button>
                <button aria-label="Open in new tab">
                  <ArrowTopRight />
                </button>
              </div>
            </div>

            {/* ================= PREVIEW CANVAS ================= */}
            <div className="relative flex min-h-0 flex-1 items-center">
              <ObjectView />
              <div className="absolute right-[86px] top-[681px] flex flex-col rounded border-2 border-[#c9ccd1] bg-[#f6f7f9] shadow">
                <button aria-label="Light theme" className="flex h-[60px] w-14 items-center justify-center border-b-2 border-[#b9bdc3] bg-[#dce0e5]">
                  <Sun />
                </button>
                <button aria-label="Dark theme" className="flex h-[54px] w-14 items-center justify-center">
                  <Moon />
                </button>
              </div>
            </div>

            {/* ================= BOTTOM BAR ================= */}
            <footer className="flex h-[82px] shrink-0 items-center justify-between border-t-2 border-[#dde0e6] bg-white">
              <button className="flex items-center gap-[10px] pl-[60px]">
                <span className="flex size-8 items-center justify-center rounded border-2 border-[#b9d0f6] bg-[#ebf2fd]">
                  <Airplane className="size-5 text-[#5c8eea]" />
                </span>
                Airport
                <span className="pl-1">
                  <CaretDown />
                </span>
              </button>
              <div className="flex h-full items-center">
                <button aria-label="Search objects" className="flex h-full w-24 items-center justify-center border-x-2 border-[#d9dbdf]">
                  <Search />
                </button>
                <div className="flex items-center gap-[50px] pl-[30px] pr-[34px] text-[#325baa]">
                  <a href="#objects">Preview objects</a>
                  <button className="flex items-center gap-[14px]">
                    Preview table
                    <ChevronUp />
                  </button>
                </div>
              </div>
            </footer>
          </main>
        </div>

        {/* soft shadow rising from below the window */}
        <div className="pointer-events-none absolute inset-x-0 bottom-0 h-[82px] overflow-hidden">
          <div className="absolute -bottom-10 left-[370px] right-[740px] h-10 rounded-3xl shadow-[0_0_90px_10px_rgba(0,0,0,0.26)]" />
        </div>
      </div>
    </div>
  );
}
